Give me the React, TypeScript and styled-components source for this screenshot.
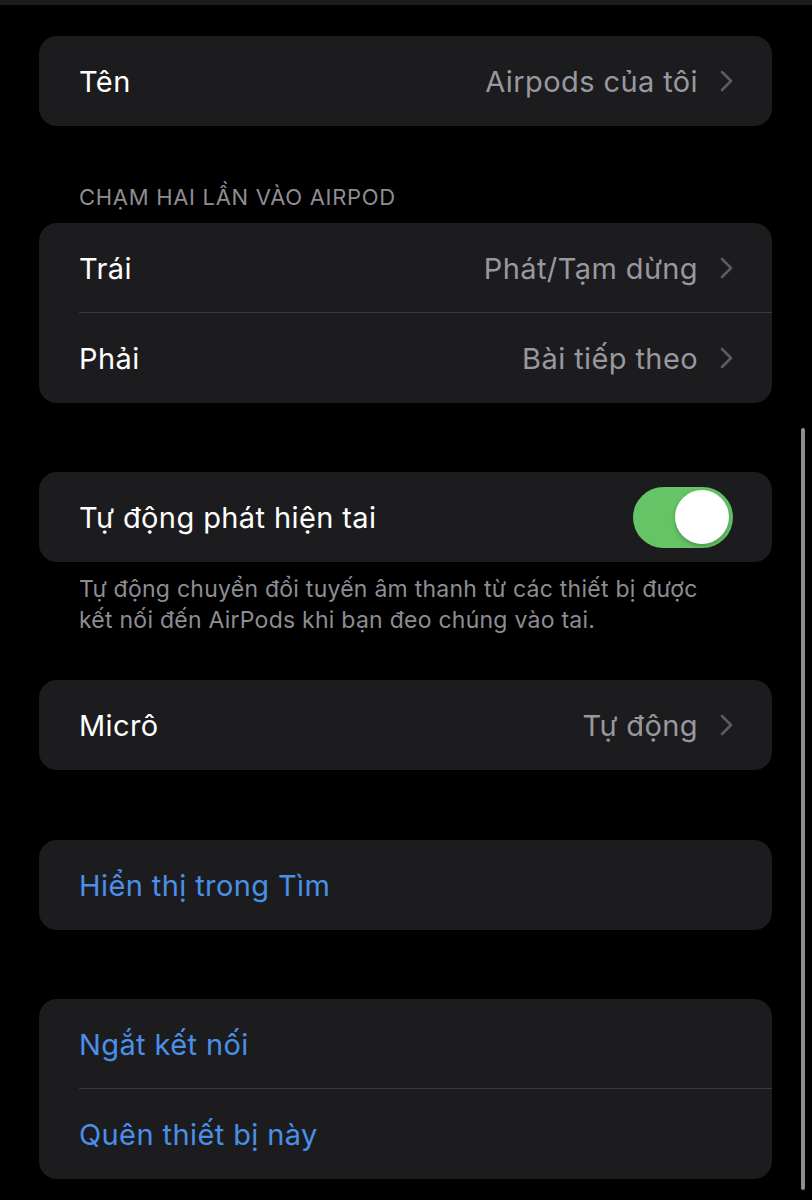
import React from 'react';
import styled, { createGlobalStyle } from 'styled-components';

const GlobalStyle = createGlobalStyle`
  html, body {
    margin: 0;
    padding: 0;
    background: #000;
  }
  body {
    font-family: Inter, "Noto Sans", "DejaVu Sans", sans-serif;
    -webkit-font-smoothing: antialiased;
  }
`;

const Page = styled.div`
  position: relative;
  width: 812px;
  height: 1200px;
  background: #000;
  overflow: hidden;
`;

const TopBar = styled.div`
  height: 5px;
  background: #1c1c1e;
`;

const Content = styled.div`
  display: flex;
  flex-direction: column;
  padding: 31px 40px 0 39px;
`;

const Group = styled.div<{ gap?: number }>`
  margin-top: ${({ gap }) => gap ?? 0}px;
  display: flex;
  flex-direction: column;
`;

const Card = styled.div`
  background: #1c1c1e;
  border-radius: 18px;
  overflow: hidden;
`;

const Row = styled.div<{ divider?: boolean }>`
  position: relative;
  height: 90px;
  display: flex;
  align-items: center;
  padding: 0 40px;
  box-sizing: border-box;

  ${({ divider }) =>
    divider &&
    `
    &::after {
      content: '';
      position: absolute;
      left: 40px;
      right: 0;
      bottom: 0;
      height: 1px;
      background: #38383a;
    }
  `}
`;

const Label = styled.span<{ blue?: boolean }>`
  flex: 1;
  font-size: 29px;
  letter-spacing: 0.4px;
  color: ${({ blue }) => (blue ? '#4a8fe8' : '#ffffff')};
`;

const Value = styled.span`
  font-size: 29px;
  letter-spacing: 0.4px;
  color: #98989e;
`;

const Chevron = styled.svg`
  width: 13px;
  height: 22px;
  margin-left: 22px;
  margin-right: -1px;
`;

const Header = styled.div`
  padding: 0 40px 13px;
  font-size: 22px;
  letter-spacing: 0.7px;
  color: #8d8d93;
`;

const Footer = styled.div`
  padding: 12px 40px 0;
  font-size: 23px;
  line-height: 31px;
  letter-spacing: 0.25px;
  color: #8d8d93;
`;

const Toggle = styled.div<{ on: boolean }>`
  width: 100px;
  height: 61px;
  margin-right: -1px;
  border-radius: 31px;
  background: ${({ on }) => (on ? '#65c466' : '#39393d')};
  display: flex;
  align-items: center;
  justify-content: ${({ on }) => (on ? 'flex-end' : 'flex-start')};
  padding: 0 4px;
  box-sizing: border-box;
`;

const Knob = styled.div`
  width: 54px;
  height: 54px;
  border-radius: 50%;
  background: #fff;
  box-shadow: 0 2px 4px rgba(0, 0, 0, 0.25);
`;

const ScrollBar = styled.div`
  position: absolute;
  right: 7px;
  top: 428px;
  width: 4px;
  height: 762px;
  border-radius: 2px;
  background: #8e8e90;
`;

const Arrow = () => (
  <Chevron viewBox="0 0 13 22">
    <path d="M2 2l9 9-9 9" fill="none" stroke="#5b5b60" strokeWidth="2.6" strokeLinecap="round" strokeLinejoin="round" />
  </Chevron>
);

const NavRow: React.FC<{ label: string; value: string; divider?: boolean }> = ({ label, value, divider }) => (
  <Row divider={divider}>
    <Label>{label}</Label>
    <Value>{value}</Value>
    <Arrow />
  </Row>
);

export default function App() {
  return (
    <Page>
      <GlobalStyle />
      <TopBar />
      <Content>
        <Card>
          <NavRow label="Tên" value="Airpods của tôi" />
        </Card>

        <Group gap={58}>
          <Header>CHẠM HAI LẦN VÀO AIRPOD</Header>
          <Card>
            <NavRow label="Trái" value="Phát/Tạm dừng" divider />
            <NavRow label="Phải" value="Bài tiếp theo" />
          </Card>
        </Group>

        <Group gap={69}>
          <Card>
            <Row>
              <Label>Tự động phát hiện tai</Label>
              <Toggle on>
                <Knob />
              </Toggle>
            </Row>
          </Card>
          <Footer>
            Tự động chuyển đổi tuyến âm thanh từ các thiết bị được
            <br />
            kết nối đến AirPods khi bạn đeo chúng vào tai.
          </Footer>
        </Group>

        <Group gap={44}>
          <Card>
            <NavRow label="Micrô" value="Tự động" />
          </Card>
        </Group>

        <Group gap={70}>
          <Card>
            <Row>
              <Label blue>Hiển thị trong Tìm</Label>
            </Row>
          </Card>
        </Group>

        <Group gap={69}>
          <Card>
            <Row divider>
              <Label blue>Ngắt kết nối</Label>
            </Row>
            <Row>
              <Label blue>Quên thiết bị này</Label>
            </Row>
          </Card>
        </Group>
      </Content>
      <ScrollBar />
    </Page>
  );
}
